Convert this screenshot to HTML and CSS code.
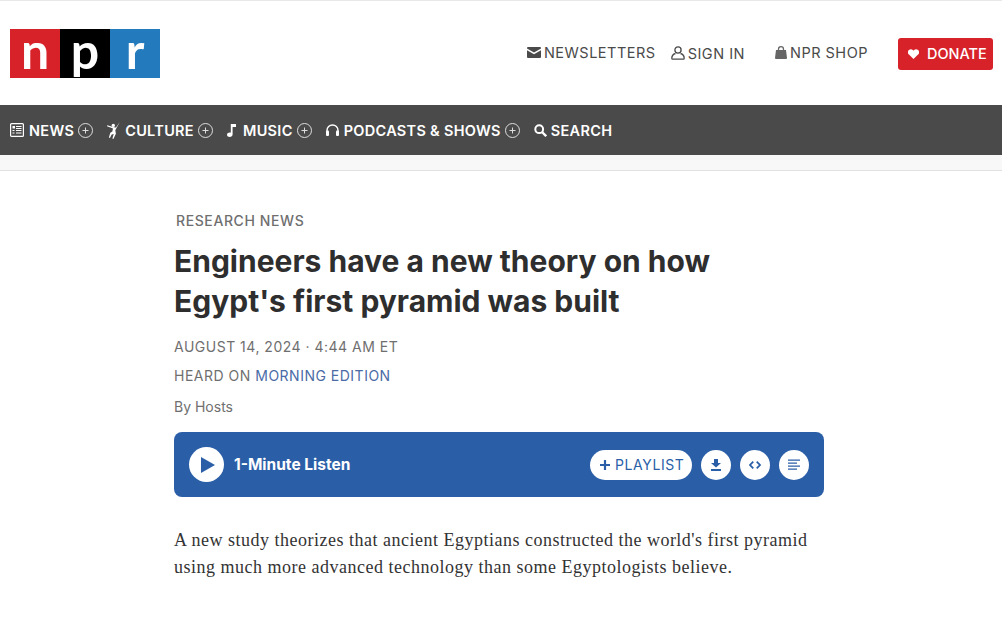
FILE: index.html
```html
<!DOCTYPE html>
<html lang="en">
<head>
<meta charset="utf-8">
<title>Engineers have a new theory on how Egypt's first pyramid was built</title>
<link rel="stylesheet" href="styles.css">
</head>
<body>
<header class="masthead">
  <a class="logo" href="#"><span class="logo-n">n</span><span class="logo-p">p</span><span class="logo-r">r</span></a>
  <nav class="utility">
    <a class="util util-news" href="#"><svg class="ic-mail" viewBox="0 0 14 11"><path fill="#4a4a4a" d="M1 0h12a1 1 0 0 1 1 1v.6L7 5.6 0 1.600V1a1 1 0 0 1 1-1zM0 3.200l7 4 7-4V10a1 1 0 0 1-1 1H1a1 1 0 0 1-1-1z"/></svg>NEWSLETTERS</a>
    <a class="util util-sign" href="#"><svg class="ic-user" viewBox="0 0 14 14"><circle cx="7" cy="4" r="3.100" fill="none" stroke="#4a4a4a" stroke-width="1.300"/><path fill="none" stroke="#4a4a4a" stroke-width="1.300" d="M4.500 7.500C2.500 8 .8 9.800.8 12.300c0 .6.300.9.900.9h10.600c.6 0 .9-.3.900-.9 0-2.500-1.700-4.300-3.700-4.800"/></svg>SIGN IN</a>
    <a class="util util-shop" href="#"><svg class="ic-bag" viewBox="0 0 12 13"><path fill="none" stroke="#666" stroke-width="1.300" d="M3.500 5V3.200a2.500 2.500 0 0 1 5 0V5"/><path fill="#666" d="M1 4h10l1 8a1 1 0 0 1-1 1H1a1 1 0 0 1-1-1z"/></svg>NPR SHOP</a>
    <a class="donate" href="#"><svg class="ic-heart" viewBox="0 0 12 11"><path fill="#fff" d="M6 11 1 6A3 3 0 0 1 1 1.200a3.100 3.100 0 0 1 4.300 0L6 2l.7-.8A3.100 3.100 0 0 1 11 1.200 3 3 0 0 1 11 6z"/></svg>DONATE</a>
  </nav>
</header>
<nav class="mainnav">
  <a class="nav-item" href="#"><svg class="ic-nav" viewBox="0 0 14 14"><rect x=".6" y=".6" width="12.800" height="12.800" rx="1" fill="none" stroke="#fff" stroke-width="1.200"/><path fill="#fff" d="M2.500 3h2.500v2.500H2.500zM6 3h5.500v1H6zM6 5h5.500v1H6zM2.500 7h2v1h-2zM6 7h5.500v1H6zM2.500 9.500h2v1h-2zM6 9.500h5.500v1H6z"/></svg>NEWS<svg class="plus" viewBox="0 0 15 15"><circle cx="7.500" cy="7.500" r="7" fill="none" stroke="#ddd" stroke-width="1"/><path stroke="#ddd" d="M7.500 4.500v6M4.500 7.500h6"/></svg></a>
  <a class="nav-item" href="#"><svg class="ic-culture" viewBox="0 0 13 17"><circle cx="6.300" cy="3.400" r="1.700" fill="#fff"/><path fill="#fff" d="M12.800 0 8.300 8.300l.6 3.400L6.400 17l-1-.6 1.300-4.300-2 .4L2.900 16l-1-.4L3.300 10.800l2-1.400L6 6.500 0 4.300l.3-1L7 5.200 9 5.500z"/></svg>CULTURE<svg class="plus" viewBox="0 0 15 15"><circle cx="7.500" cy="7.500" r="7" fill="none" stroke="#ddd" stroke-width="1"/><path stroke="#ddd" d="M7.500 4.500v6M4.500 7.500h6"/></svg></a>
  <a class="nav-item" href="#"><svg class="ic-music" viewBox="0 0 9 13"><path fill="#fff" d="M3.800 0H9v3H5.600v7.500C5.600 12 4.300 13 2.800 13S0 12.200 0 10.800s1.400-2.300 2.800-2.300c.4 0 .7 0 1 .200z"/></svg>MUSIC<svg class="plus" viewBox="0 0 15 15"><circle cx="7.500" cy="7.500" r="7" fill="none" stroke="#ddd" stroke-width="1"/><path stroke="#ddd" d="M7.500 4.500v6M4.500 7.500h6"/></svg></a>
  <a class="nav-item" href="#"><svg class="ic-phones" viewBox="0 0 13 12"><path fill="none" stroke="#fff" stroke-width="1.400" d="M1 8V6.500a5.500 5.500 0 0 1 11 0V8"/><rect y="6.500" width="3" height="5.500" rx="1" fill="#fff"/><rect x="10" y="6.500" width="3" height="5.500" rx="1" fill="#fff"/></svg>PODCASTS &amp; SHOWS<svg class="plus" viewBox="0 0 15 15"><circle cx="7.500" cy="7.500" r="7" fill="none" stroke="#ddd" stroke-width="1"/><path stroke="#ddd" d="M7.500 4.500v6M4.500 7.500h6"/></svg></a>
  <a class="nav-item nav-search" href="#"><svg class="ic-search" viewBox="0 0 13 13"><circle cx="5.200" cy="5.200" r="3.900" fill="none" stroke="#fff" stroke-width="2"/><path stroke="#fff" stroke-width="2.400" d="m8 8 4.200 4.200"/></svg>SEARCH</a>
</nav>
<div class="strip"></div>
<main class="story">
  <a class="slug" href="#">RESEARCH NEWS</a>
  <h1 class="title">Engineers have a new theory on how Egypt's first pyramid was built</h1>
  <p class="date">AUGUST 14, 2024 · 4:44 AM ET</p>
  <p class="heard">HEARD ON <a href="#">MORNING EDITION</a></p>
  <p class="byline">By Hosts</p>
  <section class="player">
    <button class="play" aria-label="Play"><svg viewBox="0 0 14 16"><path fill="#2a5fa8" d="M0 0l14 8-14 8z"/></svg></button>
    <span class="listen">1-Minute Listen</span>
    <div class="tools">
      <button class="playlist"><svg viewBox="0 0 10 10"><path stroke="#2a5fa8" stroke-width="2.200" d="M5 0v10M0 5h10"/></svg>PLAYLIST</button>
      <button class="tool" aria-label="Download"><svg viewBox="0 0 12 12"><path fill="#2a5fa8" d="M4 0h4v4h3L6 8.500 1 4h3zM1 10h10v2H1z"/></svg></button>
      <button class="tool" aria-label="Embed"><svg viewBox="0 0 14 10"><path fill="none" stroke="#2a5fa8" stroke-width="2" d="M5 1 1.200 5 5 9M9 1l3.800 4L9 9"/></svg></button>
      <button class="tool" aria-label="Transcript"><svg viewBox="0 0 12 11"><path stroke="#2a5fa8" stroke-width="1.200" d="M0 .6h12M0 3.600h9M0 6.600h12M0 9.600h9"/></svg></button>
    </div>
  </section>
  <p class="lede">A new study theorizes that ancient Egyptians constructed the world's first pyramid using much more advanced technology than some Egyptologists believe.</p>
</main>
</body>
</html>
```
FILE: styles.css
```css
* { box-sizing: border-box; }
html, body { margin: 0; padding: 0; }
body { background: #fff; font-family: "Inter", "Liberation Sans", sans-serif; height: 619px; overflow: hidden; border-top: 1px solid #e8e8e8; }
a { text-decoration: none; color: inherit; }
button { border: 0; padding: 0; font: inherit; cursor: pointer; }
svg { display: block; flex: none; }

.masthead { height: 104px; display: flex; align-items: center; justify-content: space-between; padding: 0 9px 0 10px; }
.logo { display: flex; width: 150px; height: 49px; margin-top: 0; font-family: "Lato", "Liberation Sans", sans-serif; font-weight: 700; font-size: 50px; line-height: 42px; color: #fff; }
.logo span { flex: 1; text-align: center; }
.logo-n { background: #d8222a; }
.logo-p { background: #000; }
.logo-r { background: #237bbd; }

.utility { display: flex; align-items: center; font-size: 14.500px; letter-spacing: .5px; color: #4a4a4a; margin-top: 1px; }
.util { display: flex; align-items: center; gap: 3px; }
.util-news { margin-right: 15px; margin-top: -3px; }
.util-sign { margin-right: 30px; margin-top: 0; }
.util-shop { margin-right: 30px; margin-top: -3px; }
.ic-mail { width: 14px; height: 11px; }
.ic-user { width: 14px; height: 14px; margin-top: -2px; }
.ic-bag { width: 12px; height: 13px; }
.donate { display: flex; align-items: center; gap: 8px; width: 95px; height: 32px; padding-left: 10px; background: #d8222a; color: #fff; border-radius: 3px; font-weight: 500; letter-spacing: 0; font-size: 14.500px; }
.ic-heart { width: 11px; height: 10px; }

.mainnav { height: 50px; background: #4a4a4a; display: flex; align-items: center; padding-left: 10px; color: #fff; font-size: 14.500px; font-weight: 600; letter-spacing: .3px; }
.nav-item { display: flex; align-items: center; margin-right: 14px; }
.plus { width: 15px; height: 15px; margin-left: 4px; margin-top: 1px; }
.ic-nav { width: 14px; height: 14px; margin-right: 5px; }
.ic-culture { width: 13px; height: 17px; margin-right: 5px; }
.ic-music { width: 9px; height: 13px; margin-right: 7px; }
.ic-phones { width: 13px; height: 12px; margin-right: 5px; }
.ic-search { width: 13px; height: 13px; margin-right: 4px; }

.strip { height: 16px; background: #f8f8f8; border-bottom: 1px solid #e0e0e0; }

.story { width: 650px; margin: 0 0 0 174px; padding-top: 41px; }
.slug { display: block; font-size: 14px; font-weight: 500; letter-spacing: .6px; line-height: 17px; color: #6f6f6f; margin-left: 2px; }
.title { margin: 12px 0 0; font-size: 30px; line-height: 40px; font-weight: 700; color: #2e2e2e; width: 600px; letter-spacing: 0; }
.date, .heard { margin: 0; font-size: 14px; line-height: 17px; letter-spacing: .5px; color: #6f6f6f; }
.date { margin-top: 17px; }
.heard { margin-top: 12px; }
.heard a { color: #4a6ba6; }
.byline { margin: 14px 0 0; font-size: 14px; line-height: 17px; color: #6f6f6f; }

.player { margin-top: 17px; height: 65px; background: #2a5fa8; border-radius: 8px; display: flex; align-items: center; padding: 0 15px; }
.play { width: 35px; height: 35px; border-radius: 50%; background: #fff; display: flex; align-items: center; justify-content: center; padding-left: 3px; }
.play svg { width: 14px; height: 16px; }
.listen { margin-left: 10px; color: #fff; font-size: 15.500px; font-weight: 700; }
.tools { margin-left: auto; display: flex; align-items: center; gap: 9px; }
.playlist { display: flex; align-items: center; gap: 5px; height: 30px; width: 102px; padding-left: 10px; background: #fff; color: #2a5fa8; border-radius: 15px; font-size: 14px; letter-spacing: .6px; margin-right: 0; }
.playlist svg { width: 10px; height: 10px; }
.tool { width: 30px; height: 30px; border-radius: 50%; background: #fff; display: flex; align-items: center; justify-content: center; }
.tool svg { width: 12px; height: 12px; }

.lede { margin: 30px 0 0; font-family: "Liberation Serif", serif; font-size: 18px; line-height: 27px; letter-spacing: .5px; color: #333; }
```
